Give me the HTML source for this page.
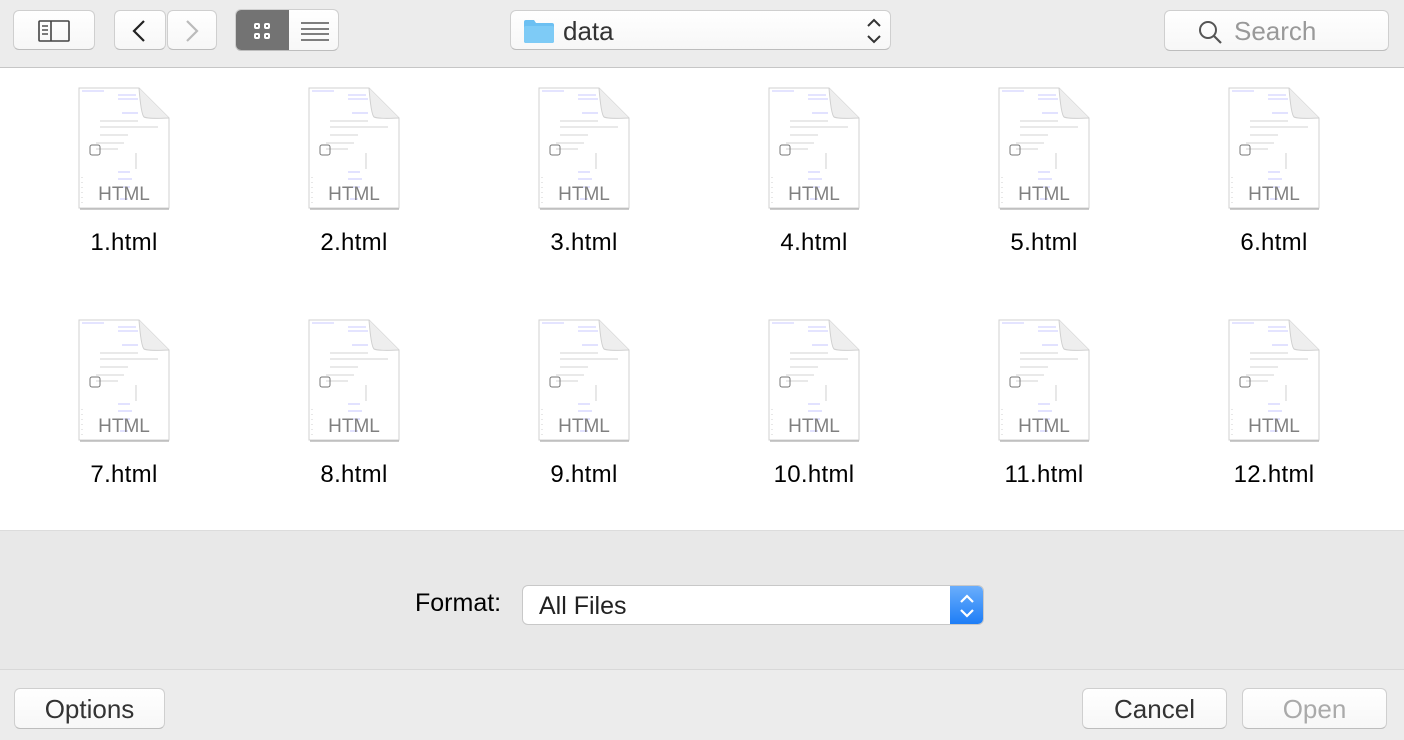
<!DOCTYPE html>
<html><head><meta charset="utf-8"><style>
*{margin:0;padding:0;box-sizing:border-box}
body{width:1404px;height:740px;overflow:hidden;background:#ececec;font-family:"Liberation Sans",sans-serif;position:relative}
.abs{position:absolute}
.btn{position:absolute;background:linear-gradient(#fff,#f7f7f7);border:1px solid #cfcfcf;border-bottom-color:#bdbdbd;border-radius:6px}
.content{position:absolute;left:0;top:67px;width:1404px;height:463px;background:#fff;border-top:1px solid #c6c6c6}
.fmt{position:absolute;left:0;top:530px;width:1404px;height:140px;background:#e8e8e8;border-top:1px solid #dcdcdc;border-bottom:1px solid #d8d8d8}
.item{position:absolute;width:200px;text-align:center}
.item svg{display:block;margin:0 auto}
.item .lbl{font-size:24px;color:#000;margin-top:18px;letter-spacing:0.3px}
</style></head><body>
<div class="btn" style="left:13px;top:10px;width:82px;height:40px">
 <svg class="abs" style="left:24px;top:9px" width="34" height="22" viewBox="0 0 34 22"><rect x="1" y="1" width="30" height="20" fill="none" stroke="#444" stroke-width="1.6" rx="1"/><line x1="13" y1="1" x2="13" y2="21" stroke="#444" stroke-width="1.6"/><line x1="4" y1="6" x2="10" y2="6" stroke="#444" stroke-width="1.4"/><line x1="4" y1="10" x2="10" y2="10" stroke="#444" stroke-width="1.4"/><line x1="4" y1="14" x2="10" y2="14" stroke="#444" stroke-width="1.4"/></svg>
</div>
<div class="btn" style="left:114px;top:10px;width:52px;height:40px">
 <svg class="abs" style="left:14px;top:7px" width="20" height="26"><path d="M15 3 L5 13 L15 23" fill="none" stroke="#222" stroke-width="2.2"/></svg>
</div>
<div class="btn" style="left:167px;top:10px;width:50px;height:40px">
 <svg class="abs" style="left:14px;top:7px" width="20" height="26"><path d="M5 3 L15 13 L5 23" fill="none" stroke="#bbb" stroke-width="2.2"/></svg>
</div>
<div class="btn" style="left:235px;top:9px;width:104px;height:42px;overflow:hidden">
 <div class="abs" style="left:0;top:0;width:53px;height:42px;background:#737373"></div>
 <svg class="abs" style="left:16px;top:11px" width="22" height="20"><g fill="none" stroke="#fff" stroke-width="2"><rect x="3" y="3" width="4" height="4" rx="1"/><rect x="13" y="3" width="4" height="4" rx="1"/><rect x="3" y="13" width="4" height="4" rx="1"/><rect x="13" y="13" width="4" height="4" rx="1"/></g></svg>
 <svg class="abs" style="left:64px;top:11px" width="30" height="20"><g stroke="#555" stroke-width="1.6"><line x1="1" y1="2" x2="29" y2="2"/><line x1="1" y1="8" x2="29" y2="8"/><line x1="1" y1="13" x2="29" y2="13"/><line x1="1" y1="19" x2="29" y2="19"/></g></svg>
</div>
<div class="btn" style="left:510px;top:10px;width:381px;height:40px">
 <svg class="abs" style="left:12px;top:7px" width="32" height="26"><path d="M1 4 Q1 2 3 2 L11 2 L13 5 L29 5 Q31 5 31 7 L31 23 Q31 25 29 25 L3 25 Q1 25 1 23Z" fill="#6cc0f2"/><rect x="1" y="8" width="30" height="17" rx="2" fill="#7ecbf6"/></svg>
 <div class="abs" style="left:52px;top:5px;font-size:26px;color:#333">data</div>
 <svg class="abs" style="left:354px;top:6px" width="18" height="28"><path d="M3 9 L9 3 L15 9 M3 19 L9 25 L15 19" fill="none" stroke="#333" stroke-width="2"/></svg>
</div>
<div class="btn" style="left:1164px;top:10px;width:225px;height:41px">
 <svg class="abs" style="left:33px;top:9px" width="26" height="26"><circle cx="10" cy="10" r="8" fill="none" stroke="#555" stroke-width="2"/><line x1="16" y1="16" x2="23" y2="23" stroke="#555" stroke-width="2.2"/></svg>
 <div class="abs" style="left:69px;top:5px;font-size:26px;color:#999">Search</div>
</div>
<div class="content" id="c"></div>
<div class="fmt">
 <div class="abs" style="left:415px;top:58px;font-size:25px;color:#000">Format:</div>
 <div class="abs" style="left:522px;top:54px;width:462px;height:40px;background:#fff;border:1px solid #c8c8c8;border-radius:6px;overflow:hidden">
  <div class="abs" style="left:16px;top:6px;font-size:25px;color:#222">All Files</div>
  <div class="abs" style="right:0;top:0;width:33px;height:40px;background:linear-gradient(#6aaefc,#1a7bf6)"></div>
  <svg class="abs" style="right:7px;top:6px" width="18" height="28"><path d="M3 10 L9 4 L15 10 M3 18 L9 24 L15 18" fill="none" stroke="#fff" stroke-width="2.2"/></svg>
 </div>
</div>
<div class="btn" style="left:14px;top:688px;width:151px;height:41px;font-size:26px;color:#333;text-align:center;line-height:41px">Options</div>
<div class="btn" style="left:1082px;top:688px;width:145px;height:41px;font-size:26px;color:#333;text-align:center;line-height:41px">Cancel</div>
<div class="btn" style="left:1242px;top:688px;width:145px;height:41px;font-size:26px;color:#aaa;text-align:center;line-height:41px">Open</div>
<script>
var c=document.getElementById('c'),h='';
for(var i=0;i<12;i++){var col=i%6,row=Math.floor(i/6);
var x=124+col*230-100,y=19+row*232;
h+='<div class="item" style="left:'+x+'px;top:'+y+'px"><svg width="94" height="124" viewBox="-1 0 94 124">'+
'<path d="M1 1 L61 1 L91 31 L91 121 L1 121Z" fill="#fff" stroke="#d0d0d0" stroke-width="1"/>'+
'<line x1="2" y1="122" x2="91" y2="122" stroke="#bbb" stroke-width="1.5"/>'+
'<path d="M61 1 Q63 27 66 30 Q70 32 91 31" fill="#eeeeee" stroke="#d0d0d0"/>'+
'<g stroke="#b8b8ff" stroke-width="0.8"><line x1="4" y1="4" x2="26" y2="4"/><line x1="40" y1="8" x2="58" y2="8"/><line x1="40" y1="12" x2="60" y2="12"/><line x1="44" y1="26" x2="60" y2="26"/><line x1="40" y1="85" x2="52" y2="85"/><line x1="40" y1="92" x2="54" y2="92"/><line x1="42" y1="100" x2="52" y2="100"/><line x1="42" y1="112" x2="50" y2="112"/></g>'+
'<g stroke="#c4c4c4" stroke-width="0.8"><line x1="22" y1="34" x2="60" y2="34"/><line x1="22" y1="40" x2="80" y2="40"/><line x1="22" y1="48" x2="50" y2="48"/><line x1="18" y1="56" x2="46" y2="56"/><line x1="18" y1="62" x2="40" y2="62"/><line x1="4" y1="90" x2="4" y2="118" stroke-dasharray="1 4"/><line x1="58" y1="66" x2="58" y2="82"/></g>'+
'<rect x="12" y="58" width="10" height="10" rx="2" fill="none" stroke="#777"/>'+
'<text x="46" y="113" text-anchor="middle" font-family="Liberation Sans,sans-serif" font-size="19" fill="#808080">HTML</text>'+
'</svg><div class="lbl">'+(i+1)+'.html</div></div>';}
c.innerHTML=h;
</script>
</body></html>
